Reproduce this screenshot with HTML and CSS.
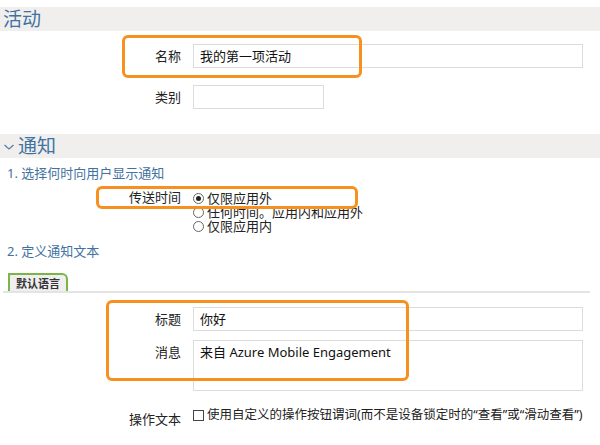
FILE: index.html
```html
<!DOCTYPE html>
<html lang="zh-CN">
<head>
<meta charset="utf-8">
<title>活动</title>
<link rel="stylesheet" href="styles.css">
</head>
<body>
<div class="page">
  <div class="section-header">活动</div>
  <div class="form-grid first">
    <label class="label">名称</label>
    <div class="input wide">我的第一项活动</div>
    <label class="label">类别</label>
    <div class="input small"></div>
  </div>

  <div class="section-header second">
    <svg class="chev" width="12" height="8" viewBox="0 0 12 8"><polyline points="1.5,2 6,6 10.5,2" fill="none" stroke="#5a7fa3" stroke-width="1.3"/></svg>通知
  </div>
  <div class="step">1. 选择何时向用户显示通知</div>
  <div class="form-grid delivery">
    <label class="label">传送时间</label>
    <div class="radios">
      <div class="radio-row"><span class="radio checked"></span>仅限应用外</div>
      <div class="radio-row"><span class="radio"></span>任何时间。应用内和应用外</div>
      <div class="radio-row"><span class="radio"></span>仅限应用内</div>
    </div>
  </div>
  <div class="step step2">2. 定义通知文本</div>
  <div class="tabs"><div class="tab">默认语言</div></div>
  <div class="form-grid texts">
    <label class="label">标题</label>
    <div class="input wide">你好</div>
    <label class="label">消息</label>
    <div class="input wide area">来自 Azure Mobile Engagement</div>
  </div>
  <div class="form-grid action">
    <label class="label action-label">操作文本</label>
    <div class="check-row"><span class="checkbox"></span>使用自定义的操作按钮谓词(而不是设备锁定时的“查看”或“滑动查看”)</div>
  </div>

  <div class="highlight h1"></div>
  <div class="highlight h2"></div>
  <div class="highlight h3"></div>
</div>
</body>
</html>
```

FILE: styles.css
```css
html, body {
  margin: 0;
  padding: 0;
  background: #ffffff;
}
.page {
  position: relative;
  width: 600px;
  height: 445px;
  overflow: hidden;
  font-family: "Noto Sans", "Noto Sans CJK SC", sans-serif;
  font-size: 13px;
  color: #222;
}
.section-header {
  margin-top: 7px;
  height: 24px;
  line-height: 24px;
  background: #f0efed;
  color: #3f72a0;
  font-size: 19px;
  padding-left: 3px;
  display: flex;
  align-items: center;
}
.section-header.second {
  margin-top: 25px;
  padding-left: 3px;
}
.chev {
  margin-right: 3px;
  margin-top: 2px;
}
.form-grid {
  display: grid;
  grid-template-columns: 181px auto;
  column-gap: 12px;
  align-items: start;
}
.form-grid.first {
  margin-top: 13px;
  row-gap: 17px;
}
.label {
  text-align: right;
  line-height: 24px;
  color: #222;
}
.input {
  box-sizing: border-box;
  height: 24px;
  border: 1px solid #dcdcdc;
  background: #fff;
  padding: 0 6px;
  line-height: 22px;
  color: #111;
}
.input.wide { width: 390px; }
.input.small { width: 131px; }
.input.area {
  height: 51px;
  line-height: 22px;
}
.step {
  margin-top: 6px;
  padding-left: 7px;
  color: #3f72a0;
  line-height: 18px;
  font-size: 13px;
}
.delivery {
  margin-top: 9px;
}
.delivery .label {
  line-height: 16px;
  margin-top: -2px;
}
.radios {
  display: flex;
  flex-direction: column;
}
.radio-row {
  display: flex;
  align-items: center;
  height: 14px;
  line-height: 14px;
  white-space: nowrap;
}
.radio {
  box-sizing: border-box;
  width: 11px;
  height: 11px;
  border: 1px solid #666;
  border-radius: 50%;
  margin-right: 3px;
  display: flex;
  align-items: center;
  justify-content: center;
  background: #fff;
}
.radio.checked::after {
  content: "";
  width: 5px;
  height: 5px;
  border-radius: 50%;
  background: #222;
}
.step2 {
  margin-top: 9px;
}
.tabs {
  margin: 13px 10px 0 3px;
  border-bottom: 2px solid #e4e4e4;
  padding-left: 5px;
  display: flex;
}
.tab {
  box-sizing: border-box;
  height: 18px;
  padding: 0 6px 0 6px;
  border: 2px solid #7bb545;
  border-bottom: none;
  border-top-right-radius: 6px;
  background: #efefef;
  font-size: 11px;
  font-weight: bold;
  line-height: 16px;
  color: #333;
  font-family: "Noto Sans CJK SC", sans-serif;
}
.texts {
  margin-top: 14px;
  row-gap: 9px;
}
.action {
  margin-top: 15px;
}
.action-label {
  line-height: 18px;
  margin-top: 4px;
}
.check-row {
  display: flex;
  align-items: center;
  line-height: 18px;
  white-space: nowrap;
  font-size: 12.5px;
}
.checkbox {
  box-sizing: border-box;
  width: 11px;
  height: 11px;
  border: 1px solid #444;
  margin-right: 3px;
  background: #fff;
}
.highlight {
  position: absolute;
  box-sizing: border-box;
  border: 3px solid #f7901e;
  border-radius: 6px;
}
.h1 { left: 122px; top: 35px; width: 240px; height: 43px; }
.h2 { left: 96px; top: 186px; width: 262px; height: 23px; }
.h3 { left: 106px; top: 300px; width: 303px; height: 81px; }
```
